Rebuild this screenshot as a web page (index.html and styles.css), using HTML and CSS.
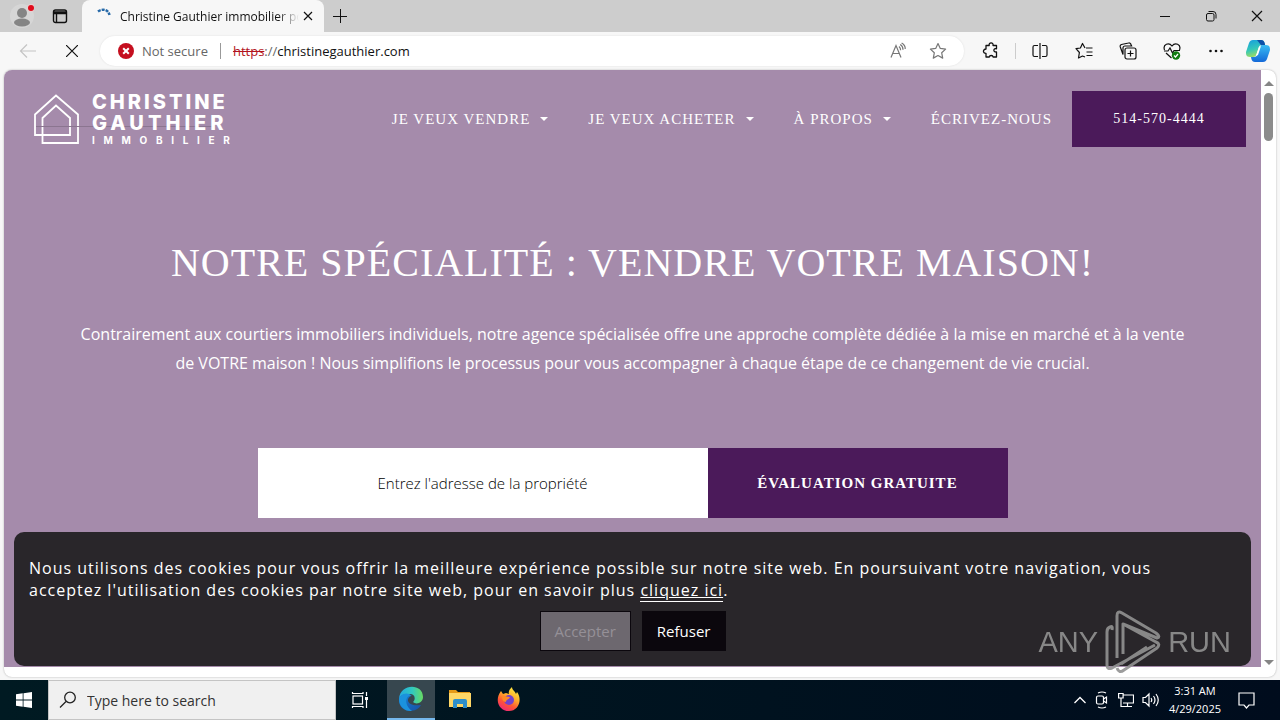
FILE: index.html
```
<!DOCTYPE html>
<html lang="fr">
<head>
<meta charset="utf-8">
<title>Christine Gauthier immobilier</title>
<link rel="stylesheet" href="styles.css">
</head>
<body>
<div class="screen">
  <header class="titlebar">
    <button class="profile" aria-label="Profile"><svg width="24" height="24" viewBox="0 0 24 24"><circle cx="12" cy="12" r="12" fill="#d6d6d6"/><circle cx="12" cy="9" r="5" fill="#858585"/><ellipse cx="12" cy="18.500" rx="8" ry="4" fill="#858585"/><circle cx="21" cy="4" r="4" fill="#e8d0d0"/><circle cx="21" cy="4" r="3" fill="#e00b1c"/></svg></button>
    <button class="workspace" aria-label="Tab actions"><svg width="16" height="16" viewBox="0 0 16 16" fill="none" stroke="#111" stroke-width="1.400"><rect x="1.500" y="2" width="13" height="12.500" rx="2"/><path d="M1.500 4h13M1.500 5.500h13M4.500 5v9"/></svg></button>
    <div class="tab">
      <svg class="spinner" width="16" height="16" viewBox="0 0 16 16" fill="none" stroke="#2669a8" stroke-width="2.500" stroke-dasharray="3 1"><path d="M2 3.500C6 .5 12 1 13.500 7"/></svg>
      <span class="tab-title">Christine Gauthier immobilier po</span>
      <button class="tab-close" aria-label="Close tab"><svg width="10" height="10" viewBox="0 0 10 10" stroke="#111" stroke-width="1.200"><path d="M1 1l8 8M9 1L1 9"/></svg></button>
    </div>
    <button class="new-tab" aria-label="New tab"><svg width="14" height="14" viewBox="0 0 14 14" stroke="#111"><path d="M7.500 0v14M0 7.500h14"/></svg></button>
    <div class="window-buttons">
      <button aria-label="Minimize"><svg width="12" height="12" viewBox="0 0 12 12" stroke="#111"><path d="M1 6.500h10"/></svg></button>
      <button aria-label="Restore"><svg width="12" height="12" viewBox="0 0 12 12" fill="none" stroke="#111"><rect x="1.500" y="3.500" width="7.500" height="7.500" rx="1.500"/><path d="M3.500 1.500h4.500a3 3 0 0 1 3 3v4"/></svg></button>
      <button aria-label="Close"><svg width="12" height="12" viewBox="0 0 12 12" stroke="#111" stroke-width="1.200"><path d="M1 1l10 10M11 1L1 11"/></svg></button>
    </div>
  </header>

  <div class="toolbar">
    <button class="tool" aria-label="Back"><svg width="18" height="16" viewBox="0 0 18 16" fill="none" stroke="#c4c4c4" stroke-width="1.200"><path d="M17 8H1.500M8 1.500L1.500 8 8 14.500"/></svg></button>
    <button class="tool" aria-label="Stop"><svg width="12" height="12" viewBox="0 0 12 12" stroke="#111" stroke-width="1.200"><path d="M0 0l12 12M12 0L0 12"/></svg></button>
    <div class="address">
      <svg width="16" height="16" viewBox="0 0 16 16"><circle cx="8" cy="8" r="8" fill="#c50f1f"/><path d="M5.200 5.200l5.600 5.600M10.800 5.200l-5.600 5.600" stroke="#fff" stroke-width="2"/></svg>
      <span class="security">Not secure</span>
      <span class="rule"></span>
      <span class="url"><s>https</s><span class="slashes">://</span>christinegauthier.com</span>
      <button class="address-icon" aria-label="Read aloud"><svg width="18" height="18" viewBox="0 0 18 18" fill="none" stroke="#777" stroke-width="1.200"><path d="M2 15.500L7 3.500l5 12M3.800 11.500h6.400M10 4.500c1.200 1 1.700 2.300 1.600 3.800M11.200 2.500c2 1.200 2.900 3 2.800 5.200M12.600 1c2.600 1.500 3.800 3.500 3.600 6"/></svg></button>
      <button class="address-icon" aria-label="Favorite"><svg width="18" height="18" viewBox="0 0 18 18" fill="none" stroke="#777" stroke-width="1.200" stroke-linejoin="round"><path d="M9 1.500l2.300 4.900 5.300.7-3.900 3.700 1 5.300L9 13.500l-4.700 2.600 1-5.300L1.400 7.100l5.300-.7z"/></svg></button>
    </div>
    <div class="tools">
      <button aria-label="Extensions"><svg width="18" height="18" viewBox="0 0 18 18" fill="none" stroke="#111" stroke-width="1.300" stroke-linejoin="round"><path d="M4 3.500h3.200a2 2 0 1 1 3.800 0h3.500v3.300c-3-1-4 3.400 0 3.200v5h-3.400c-.2-2-3.600-2-3.800 0H4v-3.700C.6 11.500.6 7 4 7z"/></svg></button>
      <span class="rule light"></span>
      <button aria-label="Split screen"><svg width="16" height="16" viewBox="0 0 16 16" fill="none" stroke="#111" stroke-width="1.200"><path d="M6 2.500H2.500a1.500 1.500 0 0 0-1.500 1.500v8a1.500 1.500 0 0 0 1.500 1.500H6M10 2.500h3.500A1.500 1.500 0 0 1 15 4v8a1.500 1.500 0 0 1-1.500 1.500H10M8 0v16"/></svg></button>
      <button aria-label="Favorites"><svg width="18" height="18" viewBox="0 0 18 18" fill="none" stroke="#111" stroke-width="1.200" stroke-linejoin="round"><path d="M11 6H17.500M11.500 10h6M11.500 13.500h6M10 6L7.500 1.500 5.400 6 1 6.700l3.400 3.800-.9 5.500 4-2 2.500 1"/></svg></button>
      <button aria-label="Collections"><svg width="18" height="18" viewBox="0 0 18 18" fill="none" stroke="#111" stroke-width="1.200"><rect x="6" y="6" width="11" height="11" rx="2"/><path d="M11.500 8.500v6M8.500 11.500h6M4 12.500L1.300 5A2 2 0 0 1 2.500 2.500L9.500 1A2 2 0 0 1 12 2.500l.6 1.500H6a2 2 0 0 0-2 2z"/></svg></button>
      <button aria-label="Browser essentials"><svg width="18" height="18" viewBox="0 0 18 18" fill="none" stroke="#111" stroke-width="1.200"><path d="M1.500 8C-.5 2 6 0 9 4c3-4 9.500-2 7.500 4M1 9h4l2-3 2.500 5L11 8.500h6M3 11l5.500 5"/><circle cx="13" cy="13.500" r="4.200" fill="#107c10" stroke="none"/><path d="M11 13.500l1.500 1.500 2.500-3" stroke="#fff"/></svg></button>
      <button aria-label="More"><svg width="16" height="16" viewBox="0 0 16 16" fill="#111"><circle cx="2.500" cy="8" r="1.300"/><circle cx="8" cy="8" r="1.300"/><circle cx="13.500" cy="8" r="1.300"/></svg></button>
    </div>
    <button class="copilot" aria-label="Copilot"><svg width="24" height="22" viewBox="0 0 24 22"><defs><linearGradient id="cpa" x2=".3" y2="1"><stop stop-color="#159ce0"/><stop offset=".6" stop-color="#35c8b8"/><stop offset="1" stop-color="#9bdc63"/></linearGradient><linearGradient id="cpb" x2="0" y2="1"><stop stop-color="#39bdf3"/><stop offset="1" stop-color="#1469d8"/></linearGradient></defs><path d="M7 0h8c2 0 3 1 3.600 3l.4 2h-3c-2 0-3 1-3.500 3L10.500 14c-.5 2-1.500 3-3.500 3H4C0 17 0 14 0 12L3 3c.8-2 2-3 4-3z" fill="url(#cpa)"/><path d="M11 0h4c2 0 3 1 3.600 3l.7 2.500h-4z" fill="#0d50a8"/><path d="M17 22H9c-2 0-3-1-3.600-3L5 17h3c2 0 3-1 3.500-3l2-6c.5-2 1.500-3 3.500-3h3c4 0 4 3 4 5l-3 9c-.8 2-2 3-4 3z" fill="url(#cpb)"/><path d="M13 7l-3 9 2-1 3-9z" fill="#fff"/></svg></button>
  </div>

  <div class="frame">
    <main class="page">
      <nav class="site-nav">
        <a class="logo" href="#">
          <svg width="45" height="52" viewBox="0 0 45 52" fill="none" stroke="#fff" stroke-width="1.800"><path d="M1 21.500L22 2.500l22 19V50H8.500V25L22 12.500 36 25v17H1z"/></svg>
          <span class="logo-text"><b>CHRISTINE</b><b class="wide">GAUTHIER</b><span class="logo-small"><i>I</i><i>M</i><i>M</i><i>O</i><i>B</i><i>I</i><i>L</i><i>I</i><i>E</i><i>R</i></span></span>
        </a>
        <div class="links">
          <a href="#">JE VEUX VENDRE<span class="caret"></span></a>
          <a href="#">JE VEUX ACHETER<span class="caret"></span></a>
          <a href="#">À PROPOS<span class="caret"></span></a>
          <a href="#">ÉCRIVEZ-NOUS</a>
        </div>
        <a class="phone" href="#">514-570-4444</a>
      </nav>
      <section class="hero">
        <h1>NOTRE SPÉCIALITÉ : VENDRE VOTRE MAISON!</h1>
        <p>Contrairement aux courtiers immobiliers individuels, notre agence spécialisée offre une approche complète dédiée à la mise en marché et à la vente de VOTRE maison ! Nous simplifions le processus pour vous accompagner à chaque étape de ce changement de vie crucial.</p>
        <form class="estimate">
          <input type="text" placeholder="Entrez l'adresse de la propriété" aria-label="Entrez l'adresse de la propriété">
          <button type="button">ÉVALUATION GRATUITE</button>
        </form>
      </section>
      <aside class="cookies">
        <p>Nous utilisons des cookies pour vous offrir la meilleure expérience possible sur notre site web. En poursuivant votre navigation, vous acceptez l'utilisation des cookies par notre site web, pour en savoir plus <a href="#">cliquez ici</a>.</p>
        <div class="choices"><button class="accept">Accepter</button><button class="refuse">Refuser</button></div>
      </aside>
    </main>
    <div class="scrollbar"><span class="up"></span><span class="thumb"></span><span class="down"></span></div>
    <div class="watermark">
      <span>ANY</span>
      <svg width="56" height="64" viewBox="0 0 56 64" fill="none" stroke="#929292" stroke-width="3" stroke-linejoin="round"><path d="M7 20Q8 15 5 17Q2 18 2 22v33q0 5 5 3l43-23M12 48V6q0-6 5-3l34 20q5 4 1 5L18 14M12 58q2 6 7 2l33-22q4-4-1-6L18 14v30M16 54l26-17"/></svg>
      <span>RUN</span>
    </div>
  </div>

  <footer class="taskbar">
    <button class="start" aria-label="Start"><svg width="16" height="16" viewBox="0 0 16 16" fill="#fff"><path d="M0 2.300l6.700-1v6.300H0zM7.500 1.200L16 0v7.600H7.500zM0 8.400h6.700v6.300l-6.700-1zM7.500 8.400H16V16l-8.500-1.200z"/></svg></button>
    <label class="search"><svg width="18" height="18" viewBox="0 0 18 18" fill="none" stroke="#222" stroke-width="1.300"><circle cx="11" cy="6.500" r="5.300"/><path d="M7 10.500L1 16.500"/></svg><input type="text" placeholder="Type here to search" aria-label="Type here to search"></label>
    <button class="task" aria-label="Task view"><svg width="18" height="18" viewBox="0 0 18 18" fill="none" stroke="#fff" stroke-width="1.200"><rect x="2" y="5" width="9.500" height="8"/><path d="M1.500 1v1.500h10.500V1M1.500 17v-1.500h10.500V17M15.500 1v4M15.500 9v8"/><path d="M14 6h3v3h-3z" fill="#fff" stroke="none"/></svg></button>
    <button class="task active" aria-label="Edge"><svg width="26" height="26" viewBox="0 0 26 26"><defs><linearGradient id="ea"><stop stop-color="#23a9e1"/><stop offset=".55" stop-color="#31c9bf"/><stop offset="1" stop-color="#68db62"/></linearGradient><linearGradient id="eb" x2="1" y2="1"><stop stop-color="#1683d8"/><stop offset="1" stop-color="#1750a5"/></linearGradient></defs><path d="M1 13C2-3 25-3 25 11c0 6-7 8-10 5 3-3 2-8-3-8-6 0-10 2-11 5z" fill="url(#ea)"/><path d="M1 13c2-6 9-6 12-3-5 2-5 11 10 9-4 7-13 7-17 4-4-2-5-6-5-10z" fill="url(#eb)"/><path d="M1 13c0-3 7-9 13-3-6-2-9 8 0 15C7 26 1 20 1 13z" fill="#1b92dd"/></svg></button>
    <button class="task" aria-label="Files"><svg width="22" height="20" viewBox="0 0 22 20"><path d="M0 1h7l2 2h12v6H0z" fill="#e69a17"/><path d="M0 4h22v14H0z" fill="#ffd766"/><path d="M4 19v-7q0-2 2-2h10q2 0 2 2v7h-4v-4H8v4z" fill="#2e8fcb"/></svg></button>
    <button class="task" aria-label="Firefox"><svg width="24" height="24" viewBox="0 0 24 24"><defs><linearGradient id="fx" x1=".8" x2=".3" y2="1"><stop stop-color="#fff044"/><stop offset=".4" stop-color="#ffb02b"/><stop offset=".7" stop-color="#ff5634"/><stop offset="1" stop-color="#f02877"/></linearGradient></defs><path d="M4 4l2 3 3-1 3 1c-1-3 1-5 3-7 0 3 3 4 4 7l1-2c6 8 1 19-8 19C2 24-3 13 4 4z" fill="url(#fx)"/><circle cx="12" cy="13" r="5" fill="#7442cc"/><path d="M5 9c3-1 4 1 8 1-1 3-4 2-4 5-3 0-4-3-4-6z" fill="#ff8a25"/></svg></button>
    <div class="tray">
      <svg width="12" height="8" viewBox="0 0 12 8" fill="none" stroke="#fff" stroke-width="1.300"><path d="M.5 7L6 1.500 11.500 7"/></svg>
      <svg width="16" height="18" viewBox="0 0 16 18" fill="none" stroke="#fff" stroke-width="1.200"><rect x="2.500" y="5" width="7" height="8" rx="1.500"/><path d="M9.500 8l3-2v6l-3-2M4 2q4-2 8 0M4 16q4 2 8 0"/></svg>
      <svg width="16" height="16" viewBox="0 0 16 16" fill="none" stroke="#fff" stroke-width="1.200"><path d="M5 3h10.500v8H5M9.500 11v3M5 14.500h9M3 6v8.500h2"/><path d="M.6 1.500h4.500V6H.6z"/></svg>
      <svg width="17" height="16" viewBox="0 0 17 16" fill="none" stroke="#fff" stroke-width="1.200"><path d="M1 5.500h2.500L7 2v12l-3.500-3.500H1zM9 6q1.500 2 0 4M11.500 4q3 4 0 8M14 2q4.500 6 0 12"/></svg>
      <div class="clock"><time>3:31 AM</time><time>4/29/2025</time></div>
      <svg width="17" height="17" viewBox="0 0 17 17" fill="none" stroke="#fff" stroke-width="1.200"><path d="M1 1h15v12h-5l-2.500 3L6 13H1z"/></svg>
    </div>
  </footer>
</div>
</body>
</html>
```
FILE: styles.css
```
* { box-sizing: border-box; }
body { margin: 0; font-family: "Open Sans", "Noto Sans", sans-serif; color: #111; }
button { padding: 0; border: 0; background: none; font: inherit; color: inherit; display: flex; align-items: center; justify-content: center; }
svg { display: block; flex: none; }
a { color: inherit; text-decoration: none; }
.screen { min-height: 100vh; display: flex; flex-direction: column; background: #f7f7f7; }

.titlebar { height: 32px; display: flex; align-items: stretch; background: #cdcdcd; }
.profile { width: 44px; }
.workspace { width: 32px; margin-right: 6px; }
.tab { width: 242px; display: flex; align-items: center; padding: 0 11px 0 14px; background: #f7f7f7; border-radius: 8px 8px 0 0; font-size: 12px; }
.tab-title { flex: 1; margin: 0 4px 0 8px; white-space: nowrap; overflow: hidden; -webkit-mask-image: linear-gradient(90deg, #000 88%, transparent); mask-image: linear-gradient(90deg, #000 88%, transparent); }
.new-tab { width: 32px; }
.window-buttons { margin-left: auto; display: flex; }
.window-buttons button { width: 46px; }

.toolbar { height: 38px; display: flex; align-items: center; padding: 0 10px 0 6px; }
.tool { width: 44px; height: 30px; }
.address { flex: 1; height: 30px; margin: 0 5px 0 6px; padding: 0 10px 0 18px; display: flex; align-items: center; gap: 8px; background: #fff; border-radius: 15px; font-size: 13px; box-shadow: 0 0 2px #ddd; }
.security { color: #666; }
.rule { width: 1px; height: 16px; margin: 0 4px; background: #999; }
.rule.light { margin: 0 2px; background: #ccc; }
.url { flex: 1; }
.url s { color: #b3141d; }
.slashes { color: #666; }
.address-icon { width: 32px; height: 30px; }
.tools { display: flex; align-items: center; }
.tools button { width: 44px; height: 30px; }
.copilot { width: 24px; margin-left: 8px; }

.frame { flex: 1; position: relative; display: flex; margin: 0 4px 3px; padding-bottom: 10px; background: #fff; border-radius: 8px; box-shadow: 0 0 2px #aaa; }
.page { flex: 1; position: relative; display: flex; flex-direction: column; background: #a58bab; color: #fff; border-radius: 8px 0 0 0; }
.site-nav { display: flex; align-items: center; padding: 20px 15px 0 30px; font: 15px/20px "Liberation Serif", serif; letter-spacing: 1px; }
.logo { display: flex; gap: 13px; align-items: center; position: relative; letter-spacing: 0; }
.logo::after { content: ""; position: absolute; left: 2px; right: 16px; top: 36px; height: 1px; background: #8b7590; }
.logo-text { width: 138px; padding-top: 2px; display: flex; flex-direction: column; font-family: Inter, sans-serif; position: relative; z-index: 1; }
.logo-text b { font-size: 20px; line-height: 21px; font-weight: 800; letter-spacing: 3px; }
.logo-text .wide { letter-spacing: 4px; }
.logo-small { display: flex; justify-content: space-between; font-size: 10px; line-height: 13px; font-weight: 700; }
.logo-small i { font-style: normal; }
.links { display: flex; gap: 40px; margin-left: auto; margin-right: 20px; }
.links a { display: flex; align-items: center; }
.caret { margin-left: 10px; border: 4px solid transparent; border-top-color: #fff; border-bottom: 0; }
.phone { width: 174px; padding: 18px 0; text-align: center; background: #4b1a5a; font-size: 14px; }
.hero { text-align: center; padding: 91px 54px 0; }
h1 { margin: 0; font: 40px/50px "Liberation Serif", serif; letter-spacing: 1px; }
.hero p { margin: 32px 0 70px; padding: 0 16px; font-size: 16px; line-height: 29px; }
.estimate { display: flex; max-width: 750px; margin: 0 auto; }
.estimate input { flex: 3; min-width: 0; height: 70px; border: 0; padding: 0; background: #fff; text-align: center; font: 300 15px "Open Sans", sans-serif; }
.estimate input::placeholder { color: #000; opacity: 1; }
.estimate button { flex: 2; background: #4b1a5a; font: bold 15px "Liberation Serif", serif; letter-spacing: 1px; }
.cookies { position: absolute; left: 10px; right: 10px; bottom: 1px; padding: 25px 15px 15px; background: #29262a; border-radius: 10px; }
.cookies p { margin: 0 0 10px; padding-right: 40px; font-size: 16px; line-height: 22px; letter-spacing: 1px; }
.cookies a { text-decoration: underline; border-bottom: 1px solid #fff; }
.choices { display: flex; justify-content: center; gap: 11px; font-size: 15px; }
.choices button { height: 40px; padding: 0 14px; border: 1px solid #0b070d; }
.choices .accept { background: #6d686f; color: #959097; }
.choices .refuse { background: #0b070d; }
.scrollbar { width: 15px; display: flex; flex-direction: column; align-items: center; padding: 11px 0 2px; }
.up, .down { border: 5px solid transparent; }
.up { border-bottom-color: #858585; border-top: 0; }
.down { margin-top: auto; border-top-color: #858585; border-bottom: 0; }
.thumb { width: 9px; height: 48px; margin-top: 7px; background: #8b8b8b; border-radius: 5px; }
.watermark { position: absolute; right: 45px; bottom: 3px; display: flex; align-items: center; gap: 7px; color: #929292; font: 29px/64px "Liberation Sans Narrow", "Liberation Sans", sans-serif; opacity: .9; }

.taskbar { height: 40px; display: flex; background: linear-gradient(90deg, #001a22, #00121f 60%, #000c1d); color: #fff; }
.start { width: 48px; }
.search { width: 288px; display: flex; align-items: center; gap: 10px; padding: 0 10px; background: #f0f0f0; border: 1px solid #c4c4c4; }
.search input { flex: 1; min-width: 0; border: 0; padding: 0; background: none; font: 14px "Open Sans", sans-serif; }
.search input::placeholder { color: #333; opacity: 1; }
.task { width: 48px; margin-right: 1px; }
.task + .task { border-bottom: 2px solid transparent; }
.task.active { margin-left: 2px; background: #37474f; }
.task + .task.active { border-bottom-color: #76b9ed; }
.tray { margin-left: auto; display: flex; align-items: center; gap: 8px; padding-right: 25px; }
.clock { display: flex; flex-direction: column; align-items: center; margin: 0 9px 0 2px; font-size: 11px; line-height: 18px; }
```
